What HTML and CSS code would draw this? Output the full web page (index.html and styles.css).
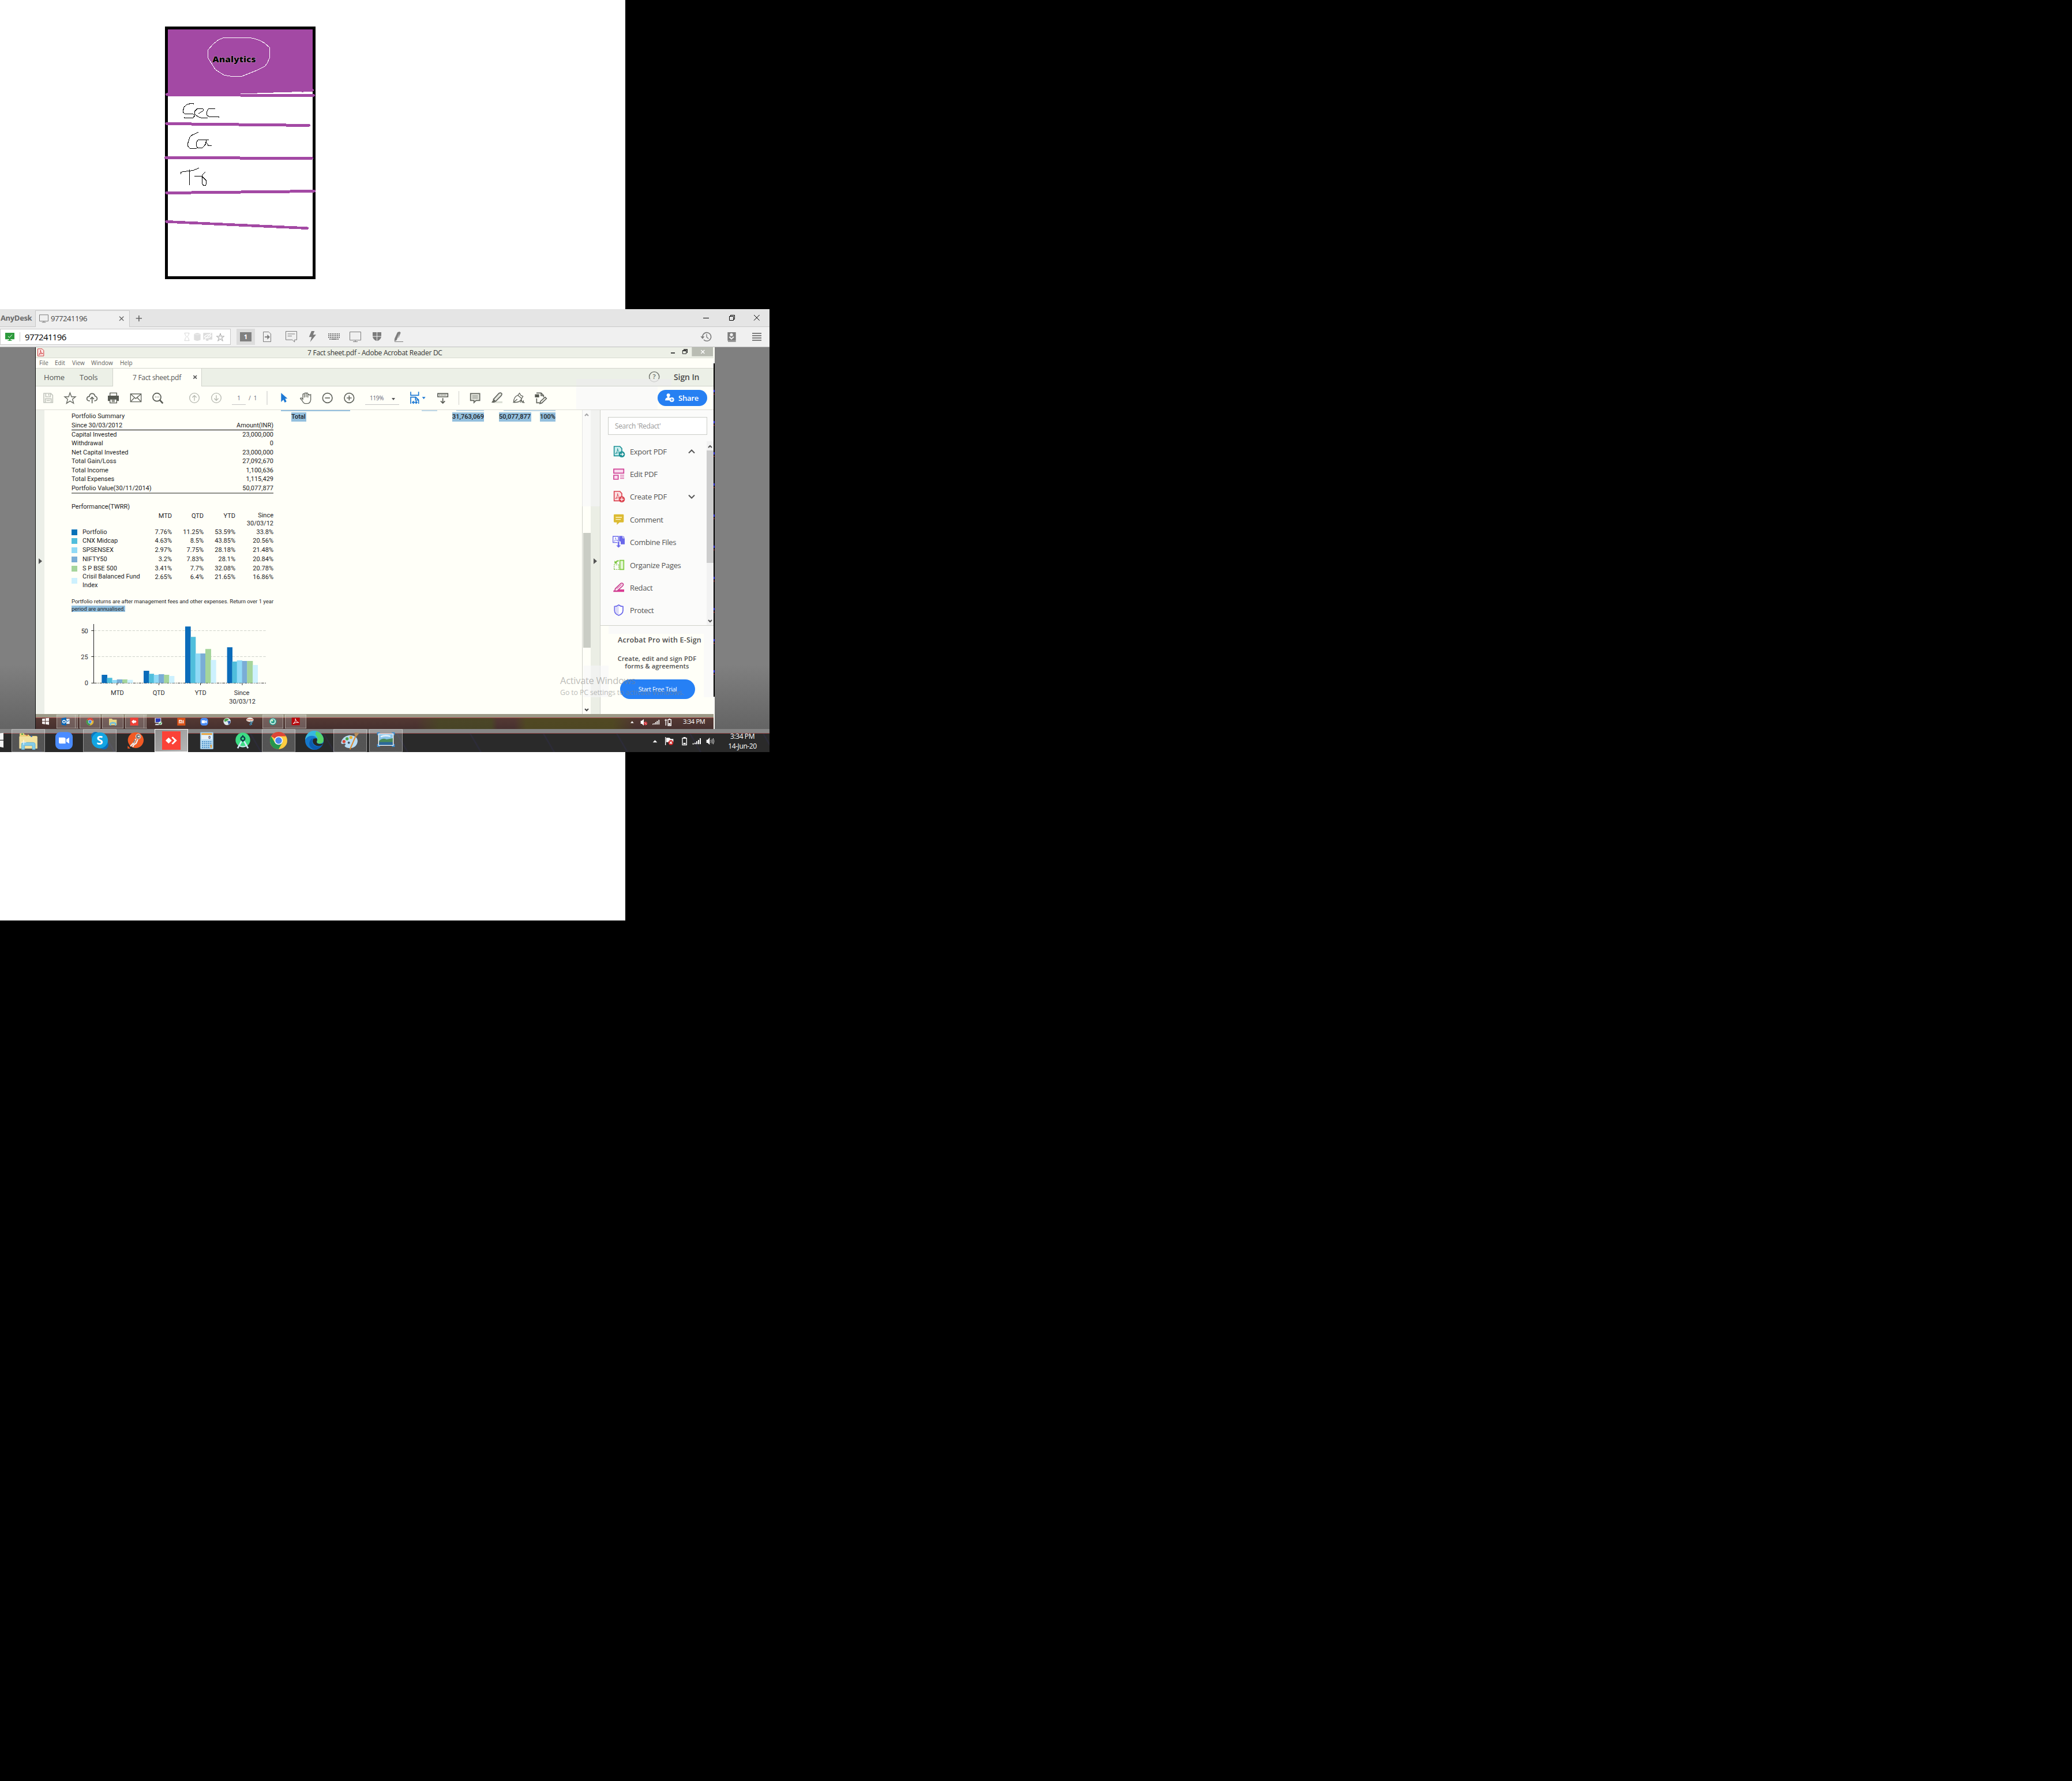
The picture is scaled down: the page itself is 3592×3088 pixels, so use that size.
FILE: index.html
```html
<!DOCTYPE html>
<html lang="en">
<head>
<meta charset="utf-8">
<title>Analytics sketch</title>
<link rel="stylesheet" href="styles.css">
</head>
<body>
<main class="board">

<section class="sketch">
  <svg class="phone" width="300" height="470" viewBox="0 0 900 1410" shape-rendering="crispEdges">
    <path d="M48 48H831V1362H48Z" fill="#000"/><path d="M63 63H816V1347H63Z" fill="#fff"/>
    <path d="M63 63H816V383L762 387L654 390L546 394L441 397V411H63Z" fill="#a349a4"/>
    <g fill="none" stroke="#a349a4" stroke-width="14" stroke-linecap="round">
      <path d="M58 401H100M441 406H821M760 382L815 379"/>
      <path d="M56 553H180M187 556H426M433 559H672M679 562H797"/>
      <path d="M52 730H432M439 733H812"/>
      <path d="M56 913H183M190 910H441M448 907H696M703 904H824"/>
      <path d="M56 1063L788 1097"/>
    </g>
    <path d="M354 106H486L510 110L540 120L566 134L593 158V208L580 238L568 254L528 275L480 294L450 306H386L354 300L310 272L290 240L271 210V170L300 138L326 117Z" fill="none" stroke="#fff" stroke-width="3"/>
    <text class="brand" x="295" y="234" textLength="226" lengthAdjust="spacingAndGlyphs">Analytics</text>
    <g fill="none" stroke="#000" stroke-width="3">
      <path d="M197 453V448H182L160 455L148 466L143 482V496L152 502H194L203 512L194 523H149V518"/>
      <path d="M222 501L247 486V477L236 475H216L203 488V504L218 516L236 523H271M309 475H274L266 490V510L278 517H329V522"/>
      <path d="M221 598L186 614L176 626L167 656V670L178 682H213M276 637H220L212 650V670L218 679H242L258 662L263 638V652L271 661V667H291"/>
      <path d="M130 815V805L168 800L193 797L224 784M176 792V873M202 829V826H232L242 830M257 804L242 820V866L248 874H260L263 862V850L242 828"/>
    </g>
  </svg>
</section>

<section class="capture">
  <header class="ad-tabs">
    <span class="ad-name">AnyDesk</span>
    <div class="ad-tab">
      <svg width="24" height="28" viewBox="189 26 72 84" fill="none" stroke="#7c7c7c" stroke-width="3"><path d="M205.500 46.500H250.500V79.500H205.500ZM218 85.500H238M228 80V86"/></svg>
      <span class="ad-id">977241196</span>
      <svg width="20" height="28" viewBox="602 26 60 84" stroke="#666" stroke-width="4"><path d="M620 55L642 77M642 55L620 77"/></svg>
    </div>
    <svg class="ad-plus" width="30" height="30" viewBox="678 18 90 90" stroke="#666" stroke-width="5"><path d="M707 66H738M722.500 51V82"/></svg>
    <svg class="ad-winbtns" width="130" height="30" viewBox="972 18 390 90" fill="none" stroke="#000" stroke-width="3"><path d="M1017 64.500H1047M1153.500 55.500H1174.500V76.500H1153.500ZM1159.500 55V49.500H1180.500V70.500H1175M1281 48L1310 77M1310 48L1281 77"/></svg>
  </header>

  <div class="ad-bar">
    <div class="ad-address">
      <svg width="36" height="28" viewBox="0 120 108 84"><path d="M27 141H75V175H55V180H62V183H40V180H47V175H27Z" fill="#2c9a3c"/><path d="M42 159L49 166L63 151" fill="none" stroke="#fff" stroke-width="3"/><path d="M103.500 138V186" stroke="#c8c8c8" stroke-width="3"/></svg>
      <span>977241196</span>
      <svg width="84" height="26" viewBox="948 123 252 78">
        <path d="M960 142H984V146H981V152L974 161L981 171V178H984V182H960V178H963V171L970 161L963 152V146H960Z" fill="none" stroke="#dadada" stroke-width="3"/>
        <path d="M1009 148Q1026 136 1043 148V178Q1026 188 1009 178Z" fill="#dedede"/><path d="M1012 148Q1026 155 1040 148" stroke="#f2f2f2" fill="none" stroke-width="3"/>
        <path d="M1057 142H1104V176H1084V183H1072V176H1057Z" fill="#dcdcdc"/><path d="M1062 162Q1080 142 1098 156Q1082 176 1062 162M1064 176L1098 143" fill="none" stroke="#fff" stroke-width="4"/>
        <path d="M1146 144L1151 159H1166L1154 168L1159 184L1146 174L1133 184L1138 168L1126 159H1141Z" fill="none" stroke="#a8a8a8" stroke-width="3"/><path d="M1146 154L1149 163H1157L1151 168L1153 176L1146 171L1139 176L1141 168L1135 163H1143Z" fill="none" stroke="#ccc" stroke-width="2"/>
      </svg>
    </div>
    <span class="ad-screen"><b>1</b></span>
    <svg class="ad-tools" width="260" height="34" viewBox="132 111 780 102" fill="none" stroke="#7c7c7c" stroke-width="3">
      <path d="M169.500 136.500H198L208.500 147V187.500H169.500Z"/><path d="M177 160H190V150L204 163L190 176V166H177Z" fill="#7c7c7c" stroke="none"/>
      <path d="M286.500 133.500H343.500V177.500H332V189L320 177.500H286.500ZM296 147H334M296 158H318"/>
      <path d="M420 132H436L428 151H444L413 189L421 163H407Z" fill="#7c7c7c" stroke="none"/>
      <path d="M507 147H568M507 156H568M507 165H568" stroke-width="6" stroke-dasharray="6 3"/><path d="M513 174H562" stroke-width="6" stroke-dasharray="7 3 28 3"/>
      <path d="M619.500 136.500H676.500V179.500H619.500ZM648 180V187M636 187.500H660"/>
      <path d="M738 138H759V158H738ZM762 138H783V158H762ZM738 161H759V184Q740 176 738 161ZM762 161H783Q781 176 762 184Z" fill="#7c7c7c" stroke="none"/>
      <path d="M868 139L879 136L862 179L852 184L853 172ZM878 137L883 140L872 167" fill="#7c7c7c" stroke-width="2"/><path d="M852 187.500H897"/>
    </svg>
    <svg class="ad-right" width="130" height="34" viewBox="972 111 390 102" fill="none" stroke="#7c7c7c">
      <path d="M1014 160A22 22 0 1 1 1020 177" stroke-width="5"/><path d="M1003 160H1024L1014 173Z" fill="#7c7c7c" stroke="none"/><path d="M1035 148V163L1045 172" stroke-width="4"/>
      <path d="M1144 138H1187V182H1144ZM1146 184H1187V188H1146Z" fill="#7c7c7c" stroke="none"/><circle cx="1164" cy="151" r="8" fill="#f0f0f0" stroke="none"/><path d="M1153 162L1164 173L1176 162" stroke="#f0f0f0" stroke-width="6"/>
      <path d="M1272 144H1320M1272 156H1320M1272 168H1320M1272 180H1320" stroke-width="6"/>
    </svg>
  </div>

  <div class="remote">
    <div class="acrobat">
      <div class="ac-title">
        <svg width="20" height="18" viewBox="186 216 60 54"><path d="M196.500 224.500H219L227.500 233V261.500H196.500Z" fill="#fbe9e8" stroke="#cf3b3b" stroke-width="3"/><path d="M203 254Q214 245 211 231Q211 247 223 249Q209 248 203 254" fill="none" stroke="#cf3b3b" stroke-width="3"/></svg>
        <span class="ac-caption">7 Fact sheet.pdf - Adobe Acrobat Reader DC</span>
        <svg width="77" height="18" viewBox="840 216 231 54"><path d="M849 246H870" stroke="#222" stroke-width="5"/><path d="M910 234H929V250H910Z" fill="none" stroke="#222" stroke-width="3"/><path d="M909 234H930M915 228H934V246" fill="none" stroke="#222" stroke-width="4"/><path d="M958 216H1068V263H958Z" fill="#b9bcb3"/><path d="M1006 231L1024 249M1024 231L1006 249" stroke="#fff" stroke-width="4"/></svg>
      </div>
      <nav class="ac-menu"><span class="m1">File</span><span class="m2">Edit</span><span class="m3">View</span><span class="m4">Window</span><span class="m5">Help</span></nav>
      <div class="ac-tabs">
        <span class="t-home">Home</span><span class="t-tools">Tools</span>
        <div class="t-doc"><span>7 Fact sheet.pdf</span><svg width="16" height="30" viewBox="990 328 48 90" stroke="#555" stroke-width="5"><path d="M1006 364L1023 381M1023 364L1006 381"/></svg></div>
        <svg class="t-help" width="24" height="30" viewBox="726 328 72 90"><circle cx="762.500" cy="371" r="26" fill="none" stroke="#6a6d66" stroke-width="4"/><text x="762" y="383" text-anchor="middle" font-size="34" font-weight="600" fill="#6a6d66">?</text></svg>
        <span class="t-sign">Sign In</span>
      </div>

      <div class="ac-tools">
        <svg width="40" height="40" viewBox="186 420 120 120" fill="none" stroke="#c3c6be" stroke-width="5"><path d="M228 456H264L274 466V504H228ZM238 457V474H262V457M253 459V468M236 503V484H266V503M242 493H260"/></svg>
        <svg width="38" height="40" viewBox="306 420 114 120" fill="none" stroke="#62655e" stroke-width="4"><path d="M364 453L372 474H393L377 487L383 508L364 496L346 508L352 487L336 474H357Z"/></svg>
        <svg width="38" height="40" viewBox="420 420 114 120" fill="none" stroke="#62655e" stroke-width="5"><path d="M468 495H462Q451 493 452 482Q454 472 465 472Q466 457 479 457Q491 457 494 470Q506 474 505 485Q503 495 490 495M479 508V478M469 486L479 476L489 486"/></svg>
        <svg width="38" height="40" viewBox="534 420 114 120"><path d="M561 468H618V496H608V488H572V496H561Z" fill="#565952"/><path d="M572 468V454H607V468M572 484H607V506H572ZM581 492H597M581 499H597" fill="none" stroke="#565952" stroke-width="4"/></svg>
        <svg width="38" height="40" viewBox="648 420 114 120" fill="none" stroke="#62655e" stroke-width="4"><path d="M679 459H734V500H679ZM681 461L706 483L732 461M681 498L700 478M732 498L713 478"/></svg>
        <svg width="38" height="40" viewBox="762 420 114 120" fill="none" stroke="#565952" stroke-width="5"><circle cx="816" cy="476" r="21"/><path d="M831 491L847 508" stroke-width="8"/><path d="M806 475H828" stroke-width="4" stroke-dasharray="4 5"/></svg>
        <svg class="gap-nav" width="38" height="40" viewBox="954 420 114 120" fill="none" stroke="#b5b8b0" stroke-width="4"><circle cx="1011" cy="480" r="25"/><path d="M1011 494V468M1000 478L1011 467L1022 478"/></svg>
        <svg width="38" height="40" viewBox="1068 420 114 120" fill="none" stroke="#b5b8b0" stroke-width="4"><circle cx="1125" cy="480" r="25"/><path d="M1125 466V492M1114 482L1125 493L1136 482"/></svg>
        <span class="field page">1</span><span class="pages">/ &nbsp;1</span>
        <i class="rule r1"></i>
        <svg width="32" height="40" viewBox="240 420 96 120"><path d="M262 454L295 483L283 484L290 499L281 504L274 489L262 501Z" fill="#1c78d4"/></svg>
        <svg width="37" height="40" viewBox="336 420 111 120" fill="none" stroke="#62655e" stroke-width="4"><path d="M375 489V461Q379 455 383 461V478V457Q387 450 392 457V476V457Q397 450 401 458V478V464Q406 458 409 465L416 462V490Q413 509 397 509H386Q378 508 371 493L362 483Q364 477 371 482L376 489"/></svg>
        <svg width="37" height="40" viewBox="447 420 111 120" fill="none" stroke="#62655e" stroke-width="5"><circle cx="503" cy="480" r="25"/><path d="M490 480H516"/></svg>
        <svg width="38" height="40" viewBox="558 420 114 120" fill="none" stroke="#62655e" stroke-width="5"><circle cx="616" cy="480" r="25"/><path d="M603 480H629M616 467V493"/></svg>
        <span class="field zoomlvl">119% <svg width="6" height="4" viewBox="0 0 6 4"><path d="M0 0H6L3 4Z" fill="#555"/></svg></span>
        <svg class="gap-fit" width="42" height="40" viewBox="912 420 126 120" fill="none" stroke="#1c78d4" stroke-width="5"><path d="M936 448V466H977V448M936 510V476H962L977 490V510M961 476V491H977M946 503H968M952 496L945 503L952 510M962 496L969 503L962 510"/><path d="M995 475H1013L1004 486Z" fill="#1c78d4" stroke="none"/></svg>
        <svg class="gap-kb" width="36" height="40" viewBox="1050 420 108 120" fill="none" stroke="#565952" stroke-width="5"><path d="M1077 457H1129V474H1077ZM1103 481V505M1092 496L1103 507L1114 496"/><path d="M1084 465H1124" stroke-dasharray="5 3"/></svg>
        <i class="rule r2"></i>
        <svg width="34" height="40" viewBox="1236 420 102 120" stroke="#62655e" stroke-width="5"><path d="M1247 457H1295V493H1276L1265 504V493H1247Z" fill="#e4e6de"/><path d="M1256 470H1286M1256 480H1286" stroke-width="3"/></svg>
        <svg width="34" height="40" viewBox="1338 420 102 120"><path d="M1375 497H1413V507H1368Z" fill="#dcdfd6"/><path d="M1366 487L1395 456Q1404 450 1410 458Q1411 464 1405 470L1377 498Z" fill="#e6e8e0" stroke="#62655e" stroke-width="5"/><path d="M1356 504L1367 487L1377 498L1370 505Z" fill="#62655e"/></svg>
        <svg class="gap-sign" width="34" height="40" viewBox="12 420 102 120" fill="none" stroke="#62655e" stroke-width="4"><path d="M31 503Q32 473 53 466L73 483Q66 505 31 503L50 486M53 466L62 455L68 466L80 472L73 483M66 504L72 490L76 503L82 496V504H88"/></svg>
        <svg class="gap-edit" width="36" height="40" viewBox="120 420 108 120" fill="none" stroke="#62655e" stroke-width="5"><path d="M150 454H174L187 467V476M151 482V505H166M174 454V468H187M195 476L202 483L178 506L168 509L171 498Z"/><path d="M142 461H164V477H142Z" fill="#565952" stroke="none"/></svg>
        <span class="share"><svg width="18" height="20" viewBox="818 452 54 60"><circle cx="838" cy="468" r="9" fill="#fff"/><path d="M821 495Q822 482 833 480V474H843V480Q850 482 852 495Z" fill="#fff"/><circle cx="856" cy="491" r="12" fill="#fff"/><path d="M849 491H863M856 484V498" stroke="#2680f0" stroke-width="3"/></svg>Share</span>
      </div>

      <div class="ac-body">
        <aside class="strip"><i class="tri"></i></aside>

        <article class="page-view">
          <div class="col-left">
            <table class="summary">
              <tr><td>Portfolio Summary</td><td></td></tr>
              <tr class="head"><td>Since 30/03/2012</td><td>Amount(INR)</td></tr>
              <tr><td>Capital Invested</td><td>23,000,000</td></tr>
              <tr><td>Withdrawal</td><td>0</td></tr>
              <tr><td>Net Capital Invested</td><td>23,000,000</td></tr>
              <tr><td>Total Gain/Loss</td><td>27,092,670</td></tr>
              <tr><td>Total Income</td><td>1,100,636</td></tr>
              <tr><td>Total Expenses</td><td>1,115,429</td></tr>
              <tr class="last"><td>Portfolio Value(30/11/2014)</td><td>50,077,877</td></tr>
            </table>
            <h3>Performance(TWRR)</h3>
            <div class="perf">
              <i></i><span></span><b>MTD</b><b>QTD</b><b>YTD</b><b class="since">Since 30/03/12</b>
              <i class="c1"></i><span>Portfolio</span><b>7.76%</b><b>11.25%</b><b>53.59%</b><b>33.8%</b>
              <i class="c2"></i><span>CNX Midcap</span><b>4.63%</b><b>8.5%</b><b>43.85%</b><b>20.56%</b>
              <i class="c3"></i><span>SPSENSEX</span><b>2.97%</b><b>7.75%</b><b>28.18%</b><b>21.48%</b>
              <i class="c4"></i><span>NIFTY50</span><b>3.2%</b><b>7.83%</b><b>28.1%</b><b>20.84%</b>
              <i class="c5"></i><span>S P BSE 500</span><b>3.41%</b><b>7.7%</b><b>32.08%</b><b>20.78%</b>
              <i class="c6"></i><span class="two">Crisil Balanced Fund Index</span><b>2.65%</b><b>6.4%</b><b>21.65%</b><b>16.86%</b>
            </div>
            <p class="note">Portfolio returns are after management fees and other expenses. Return over 1 year<br><mark>period are annualised.</mark></p>
            <svg class="chart" width="351" height="150" viewBox="192 180 1053 450">
              <g stroke="#cfd2ca" stroke-width="3" stroke-dasharray="13 7"><path d="M309 220.500H1205M309 355.500H1205"/></g>
              <path d="M307.500 186V493" stroke="#222" stroke-width="3"/>
              <path d="M309 493H1205" stroke="#333" stroke-width="3" stroke-dasharray="14 5 5 5"/>
              <path d="M295 220.500H309M295 355.500H309M295 493H309M428.500 493V504M646.500 493V504M862.500 493V504M1080 493V504" stroke="#222" stroke-width="3"/>
              <g fill="#0b6cba"><path d="M349 450H378V493H349ZM567 429H596V493H567ZM783 199H812V493H783ZM1001 307H1029V493H1001Z"/></g>
              <g fill="#50bedc"><path d="M376 466H404V493H376ZM594 445H621V493H594ZM811 253H838V493H811ZM1027 381H1053V493H1027Z"/></g>
              <g fill="#90daf6"><path d="M403 477H429V493H403ZM620 450H646V493H620ZM836 339H863V493H836ZM1052 375H1080V493H1052Z"/></g>
              <g fill="#7aadd6"><path d="M428 474H457V493H428ZM645 447H674V493H645ZM862 339H889V493H862ZM1079 378H1106V493H1079Z"/></g>
              <g fill="#a5d59b"><path d="M456 474H483V493H456ZM673 450H700V493H673ZM888 316H918V493H888ZM1105 378H1135V493H1105Z"/></g>
              <g fill="#cdf1fe"><path d="M482 476H511V493H482ZM699 456H727V493H699ZM916 373H944V493H916ZM1134 399H1161V493H1134Z"/></g>
              <g class="axis">
                <text x="242" y="234" textLength="36">50</text><text x="241" y="368" textLength="37">25</text><text x="260" y="505">0</text>
                <text x="396" y="556" textLength="68">MTD</text><text x="614" y="556" textLength="63">QTD</text><text x="833" y="556" textLength="60">YTD</text>
                <text x="1037" y="556" textLength="80">Since</text><text x="1012" y="599" textLength="137">30/03/12</text>
              </g>
            </svg>
          </div>
          <div class="col-right">
            <div class="cut"><i></i><i></i><i></i><i></i></div>
            <div class="total"><mark>Total</mark><mark>31,763,069</mark><mark>50,077,877</mark><mark>100%</mark></div>
          </div>
        </article>

        <div class="vscroll">
          <svg width="15" height="14" viewBox="0 0 15 14"><path d="M4 10L7 7L10 10" fill="none" stroke="#444" stroke-width="2"/></svg>
          <i class="thumb"></i>
          <svg width="15" height="14" viewBox="0 0 15 14"><path d="M4 5L7 8L10 5" fill="none" stroke="#444" stroke-width="2"/></svg>
        </div>
        <aside class="strip right"><i class="tri"></i></aside>

        <aside class="panel">
          <div class="tools">
            <div class="search">Search 'Redact'</div>
            <div class="tool-scroll">
              <ul>
                <li><svg width="24" height="24" viewBox="306 216 72 72"><path d="M314 225H344L354 236V274H314Z" fill="#cdeeee" stroke="#1f9296" stroke-width="5"/><path d="M321 263Q334 252 332 236Q333 253 347 258Q331 256 321 263" fill="none" stroke="#1f9296" stroke-width="3"/><circle cx="354" cy="266" r="16" fill="#1f9296"/><path d="M345 266H362M355 259L362 266L355 273" fill="none" stroke="#fff" stroke-width="4"/></svg><span>Export PDF</span><svg class="chev" width="12" height="8" viewBox="0 0 12 8"><path d="M1 6.500L6 1.500L11 6.500" fill="none" stroke="#555" stroke-width="2"/></svg></li>
                <li><svg width="24" height="24" viewBox="306 332 72 72" fill="#fadcf0" stroke="#cf3f93" stroke-width="5"><path d="M312 342H364V363H312ZM312 374H335V395H312Z"/><path d="M345 374H366M345 383H366M345 391H366" stroke-width="3"/></svg><span>Edit PDF</span></li>
                <li><svg width="24" height="24" viewBox="306 449 72 72"><path d="M314 458H344L354 469V507H314Z" fill="#fbdfe2" stroke="#dc4450" stroke-width="5"/><path d="M321 496Q334 485 332 469Q333 486 347 491Q331 489 321 496" fill="none" stroke="#dc4450" stroke-width="3"/><circle cx="354" cy="499" r="16" fill="#dc4450"/><path d="M344 499H364M354 489V509" stroke="#fff" stroke-width="4"/></svg><span>Create PDF</span><svg class="chev" width="12" height="8" viewBox="0 0 12 8"><path d="M1 1.500L6 6.500L11 1.500" fill="none" stroke="#555" stroke-width="2"/></svg></li>
                <li><svg width="24" height="24" viewBox="306 566 72 72"><path d="M312 578Q312 574 316 574H360Q364 574 364 578V612Q364 616 360 616H342L328 629V616H316Q312 616 312 612Z" fill="#dcbb33"/><path d="M322 590H354M322 601H348" stroke="#fff6cf" stroke-width="4"/></svg><span>Comment</span></li>
                <li><svg width="24" height="24" viewBox="306 684 72 72"><path d="M308 690H336V722H308Z" fill="#fff" stroke="#6a68ea" stroke-width="4"/><path d="M313 716Q323 709 321 696Q323 709 333 712Q321 711 313 716" fill="none" stroke="#6a68ea" stroke-width="2"/><path d="M340 688H358V700H369V731H348V716H340ZM361 688L369 697H361Z" fill="#6a68ea"/><path d="M332 716H342V736H351L337 750L323 736H332Z" fill="#6a68ea" stroke="#fff" stroke-width="2"/></svg><span>Combine Files</span></li>
                <li><svg width="24" height="24" viewBox="306 804 72 72"><path d="M344 815H364V862H344Z" fill="#e4f6d4" stroke="#7fcc3f" stroke-width="5"/><path d="M314 862V838H338M314 862H338V838" fill="none" stroke="#7aba3f" stroke-width="4" stroke-dasharray="6 5"/><path d="M316 816V832H332L326 826Q332 820 338 820V814Q328 814 321 821Z" fill="#7cc63f"/></svg><span>Organize Pages</span></li>
                <li><svg width="24" height="24" viewBox="306 923 72 72"><path d="M340 968H366V981H310V973H330Z" fill="#d93c93"/><path d="M320 964L347 938Q354 932 360 938Q364 944 358 950L331 975L317 977Z" fill="#fbe0f0" stroke="#c8408e" stroke-width="5"/><path d="M328 964L352 943" stroke="#c8408e" stroke-width="3"/></svg><span>Redact</span></li>
                <li><svg width="24" height="24" viewBox="306 1041 72 72"><path d="M338 1050Q348 1058 360 1058V1079Q359 1097 338 1104Q317 1097 316 1079V1058Q328 1058 338 1050Z" fill="#fff" stroke="#6a68ea" stroke-width="5"/><path d="M338 1053V1101Q319 1094 319 1079V1060Q330 1060 338 1053Z" fill="#dcdaf8"/></svg><span>Protect</span></li>
              </ul>
              <div class="pscroll">
                <svg width="12" height="14" viewBox="0 0 12 14"><path d="M3 9L6 6L9 9" fill="none" stroke="#555" stroke-width="2"/></svg>
                <i></i>
                <svg class="down" width="12" height="14" viewBox="0 0 12 14"><path d="M3 5L6 8L9 5" fill="none" stroke="#555" stroke-width="2"/></svg>
              </div>
            </div>
          </div>
          <div class="promo">
            <strong>Acrobat Pro with E-Sign</strong>
            <p>Create, edit and sign PDF<br>forms &amp; agreements</p>
            <a class="trial">Start Free Trial</a>
          </div>
        </aside>
      </div>

      <footer class="rt">
        <svg width="36" height="26" viewBox="186 24 108 78"><path d="M219 49L234 47V61H219ZM237 46L255 44V61H237ZM219 64H234V77L219 75ZM237 64H255V80L237 77Z" fill="#f4f0f0"/></svg>
        <svg class="on multi" width="38" height="26" viewBox="294 24 114 78"><rect x="340" y="49" width="22" height="26" fill="#e8f0fa"/><path d="M320 46L345 42V84L320 80Z" fill="#0a66b5"/><circle cx="333" cy="64" r="7" fill="none" stroke="#fff" stroke-width="4"/><path d="M346 56L352 64L360 54" fill="none" stroke="#0a66b5" stroke-width="3"/></svg>
        <svg class="on g2" width="36" height="26" viewBox="414 24 108 78"><circle cx="468" cy="64" r="19" fill="#e2b433"/><path d="M468 64L452 54A19 19 0 0 1 486 56Z" fill="#d9483b"/><path d="M452 54A19 19 0 0 0 466 83L474 68Z" fill="#3a9c50"/><circle cx="468" cy="64" r="9" fill="#4a86e0" stroke="#fff" stroke-width="2"/></svg>
        <svg class="on g3" width="37" height="26" viewBox="531 24 111 78"><path d="M567 48H582L586 53H607V82H567Z" fill="#e8d583"/><path d="M571 84V70Q587 60 604 70V84H597V74H578V84Z" fill="#6fbede"/></svg>
        <svg class="on multi g3" width="38" height="26" viewBox="651 24 114 78"><rect x="677" y="43" width="42" height="41" fill="#ee4138"/><path d="M684 64L694 54L704 64L694 74ZM701 55L710 64L701 73" fill="#fff"/></svg>
        <svg width="39" height="26" viewBox="765 24 117 78"><path d="M805 44H838V70H805Z" fill="#c8ccd8"/><path d="M810 47H834V66H810Z" fill="#2a38b8"/><path d="M809 75H826V82H806Z" fill="#d8dce0"/><circle cx="834" cy="72" r="9" fill="#e8f0e8"/><path d="M829 72L833 77L840 67" stroke="#3a9c50" stroke-width="4" fill="none"/></svg>
        <svg width="40" height="26" viewBox="882 24 120 78"><rect x="922" y="44" width="42" height="40" fill="#d9531a"/><path d="M932 73V57H943Q946 58 946 61V73M939 63V73M953 56V73" fill="none" stroke="#fff" stroke-width="4"/></svg>
        <svg width="40" height="26" viewBox="1002 24 120 78"><rect x="1042" y="44" width="40" height="40" rx="14" fill="#4a8cf4"/><path d="M1049 57H1066V72H1052Q1049 72 1049 69ZM1068 61L1075 57V72L1068 68Z" fill="#fff"/></svg>
        <svg width="40" height="26" viewBox="42 24 120 78"><circle cx="101" cy="63" r="19" fill="#dfe8ec"/><path d="M88 52Q100 42 110 54L96 62Q88 66 86 60Z" fill="#49a34d"/><path d="M100 62L118 60Q120 74 106 80Q112 68 100 62Z" fill="#2c50a0"/></svg>
        <svg width="41" height="26" viewBox="162 24 123 78"><ellipse cx="220" cy="54" rx="19" ry="11" fill="#f0ece4"/><path d="M204 54H236" stroke="#d05840" stroke-width="4"/><path d="M222 60L230 80M236 62L222 76" stroke="#4a98b8" stroke-width="4"/><circle cx="222" cy="78" r="4" fill="none" stroke="#3a88b8" stroke-width="3"/></svg>
        <svg class="on" width="36" height="26" viewBox="285 24 108 78"><circle cx="339" cy="63" r="17" fill="#dff2ee" stroke="#28a090" stroke-width="4"/><circle cx="339" cy="62" r="10" fill="#2aa08c"/><circle cx="335" cy="58" r="5" fill="#d8f8c8"/></svg>
        <svg class="on g3" width="37" height="26" viewBox="402 24 111 78"><rect x="437" y="43" width="42" height="39" fill="#b8080c"/><path d="M444 74Q460 64 456 48Q460 66 474 68Q458 66 444 74" fill="none" stroke="#fff" stroke-width="3"/></svg>
        <svg class="rt-tray" width="82" height="26" viewBox="561 534 246 78"><path d="M579 581H596L587.500 571Z" fill="#fff"/><path d="M632 569H638L648 560V594L638 585H632Z" fill="#fff"/><circle cx="657" cy="583" r="8" fill="#c8242c" stroke="#e8484c" stroke-width="3"/><path d="M652 578L662 588" stroke="#fff" stroke-width="3"/><path d="M693 587H697M702 589V582M710 589V576M718 589V570M727 589V564" stroke="#fff" stroke-width="5"/><path d="M757 566H769M763 560V594M774 563H790V594H774ZM778 560H786" stroke="#fff" stroke-width="4" fill="none"/><path d="M777 582H787V590H777Z" fill="#fff"/></svg>
        <span class="rt-clock">3:34 PM</span>
      </footer>

      <i class="haze h1"></i><i class="haze h2"></i><i class="haze h3"></i><i class="haze h4"></i><i class="haze h5"></i><i class="haze h6"></i>
      <div class="watermark"><b>Activate Windows</b><span>Go to PC settings to activate Windows.</span></div>
      <i class="edge"></i>
    </div>
  </div>

  <footer class="lt">
    <svg width="20" height="40" viewBox="0 102 60 120"><path d="M0 124L18 122V158H0ZM0 162H18V199L0 195Z" fill="#f6f6f6"/></svg>
    <svg class="on" width="58" height="40" viewBox="60 102 174 120"><path d="M102 128Q102 124 106 124H124L128 131H150L154 138H190L194 142V204H102Z" fill="#e9cf77"/><path d="M100 141H194V203H100Z" fill="#f3e2a0"/><path d="M111 126H120V131H111Z" fill="#21a03a"/><path d="M134 132H144V136H134Z" fill="#cc4830"/><path d="M159 138H168V143H159Z" fill="#2a70c8"/><path d="M112 209V182Q112 172 124 172H170Q183 172 183 182V209H168V188H128V209Z" fill="#84cbe8" stroke="#4ca4cc" stroke-width="2"/><path d="M123 158V184M111 171H136" stroke="#fff" stroke-width="3"/></svg>
    <svg width="66" height="40" viewBox="234 102 198 120"><rect x="288" y="118" width="90" height="90" rx="26" fill="#4a8cff"/><path d="M306 146H332Q341 146 341 154V178H314Q306 178 306 170ZM345 156L360 146V178L345 168Z" fill="#fff"/></svg>
    <svg class="on" width="58" height="40" viewBox="432 102 174 120"><circle cx="497" cy="140" r="23" fill="#0b78c0"/><circle cx="540" cy="184" r="24" fill="#0b6cb8"/><circle cx="519" cy="161" r="42" fill="#12a5e2"/><text x="519" y="182" text-anchor="middle" class="sk">S</text></svg>
    <svg width="66" height="40" viewBox="606 102 198 120"><circle cx="706" cy="160" r="41" fill="#f15a24"/><path d="M664 189L678 203H664Z" fill="#f15a24"/><circle cx="719" cy="141" r="13" fill="#777" stroke="#eee" stroke-width="3"/><path d="M714 140L726 136V146Z" fill="#fff"/><path d="M706 153L697 172L678 192M716 157L708 176L696 184L690 196" fill="none" stroke="#eee" stroke-width="7"/><path d="M702 158L694 174" stroke="#777" stroke-width="5"/></svg>
    <svg class="on active" width="58" height="40" viewBox="804 102 174 120"><rect x="843" y="114" width="96" height="96" fill="#fb4237"/><path d="M861 162L877 146L893 162L877 178Z" fill="#fff"/><path d="M892 146L899 142L920 162L899 182L892 178L907 162Z" fill="#fff"/></svg>
    <svg width="62" height="40" viewBox="978 102 186 120"><rect x="1042" y="119" width="67" height="87" rx="3" fill="#b9dcf2" stroke="#7db4dc" stroke-width="2"/><path d="M1048 124H1103V132H1048Z" fill="#f0a030"/><path d="M1048 134H1103V156H1048Z" fill="#e8f2f8"/><text x="1084" y="152" font-size="20" font-weight="700" fill="#446">0</text><path d="M1050 168H1102M1050 178H1102M1050 188H1102M1050 198H1092" stroke="#4a90c8" stroke-width="6" stroke-dasharray="6 4"/><path d="M1098 184V200" stroke="#f0a030" stroke-width="7"/></svg>
    <svg width="66" height="40" viewBox="84 102 198 120"><circle cx="183" cy="159" r="38" fill="#3ddc84"/><path d="M176 166L156 202M190 166L210 202" stroke="#d5e8f8" stroke-width="8"/><path d="M160 186Q183 202 206 186" fill="none" stroke="#d5e8f8" stroke-width="5"/><circle cx="183" cy="152" r="10" fill="none" stroke="#0e3b48" stroke-width="7"/><path d="M183 134V142M183 163V168" stroke="#0e3b48" stroke-width="6"/></svg>
    <svg class="on" width="58" height="40" viewBox="282 102 174 120"><circle cx="369" cy="162" r="45" fill="#ffcd40"/><path d="M369 162L330 139.500A45 45 0 0 1 408 139.500L369 140Z" fill="#db4437"/><path d="M330 139.500A45 45 0 0 0 369 207L389 172L369 162L350 173Z" fill="#25964e"/><circle cx="369" cy="162" r="22" fill="#f4f4f4"/><circle cx="369" cy="162" r="17" fill="#4a86ee"/></svg>
    <svg width="66" height="40" viewBox="456 102 198 120"><circle cx="555" cy="162" r="48" fill="#1578cc"/><path d="M507 160A48 48 0 0 1 603 158Q602 178 580 178Q568 176 568 168Q574 160 568 150Q552 132 526 140Q512 146 507 160Z" fill="#38b8e0"/><path d="M564 115A48 48 0 0 1 603 158Q602 178 580 178Q568 176 568 168Q578 150 560 130Z" fill="#56d468"/><path d="M548 150Q536 172 556 188Q574 198 596 186Q586 206 560 210Q530 204 528 178Q530 156 548 150Z" fill="#0c5cb0"/><path d="M550 152Q540 170 556 184Q572 196 594 186L604 172Q600 180 582 180Q566 178 567 168Q572 158 566 150Z" fill="#262626"/></svg>
    <svg class="on" width="58" height="40" viewBox="654 102 174 120"><path d="M736 134Q778 134 780 164Q776 200 738 202Q716 200 712 190Q724 178 710 178Q694 184 694 172Q698 142 736 134Z" fill="#b8dcf4"/><circle cx="725" cy="153" r="8" fill="#4aa84a"/><circle cx="745" cy="146" r="8" fill="#e8b030"/><circle cx="709" cy="167" r="8" fill="#d84838"/><circle cx="734" cy="173" r="6" fill="#456"/><path d="M772 134L740 208" stroke="#e08a2c" stroke-width="6"/><path d="M764 120L789 122L774 142L764 134Z" fill="#b48a5c"/></svg>
    <svg class="on g4" width="58" height="40" viewBox="840 102 174 120"><path d="M884 134V122H896M958 122H970V134M970 180V192H958M896 192H884V180" fill="none" stroke="#3a8cd0" stroke-width="6"/><path d="M889 127H965V187H889Z" fill="#8ac4ea" stroke="#fff" stroke-width="4"/><path d="M891 164Q910 146 930 156L963 150V172H891Z" fill="#4a8a5a"/><path d="M891 170H963V185H891Z" fill="#2c6898"/><path d="M900 142Q920 132 950 140" stroke="#e8f4fc" stroke-width="7" fill="none"/></svg>
    <svg class="lt-tray" width="130" height="40" viewBox="660 612 390 120"><path d="M695 682H718L706.500 670Z" fill="#fff"/><path d="M759 654H763V696H759ZM765 658H782L788 664H802V680H765Z" fill="#fff"/><circle cx="789" cy="683" r="13" fill="#cc2020"/><path d="M783 677L795 689M795 677L783 689" stroke="#fff" stroke-width="4"/><path d="M849 660H871V695H849ZM854 656H866" fill="none" stroke="#fff" stroke-width="4"/><path d="M854 684H866V691H854Z" fill="#fff"/><path d="M902 689H908M915 691V683M924 691V676M933 691V669M942 691V660" stroke="#fff" stroke-width="6"/><path d="M974 668H980L991 656V694L980 684H974Z" fill="#fff"/><path d="M997 669Q1002 676 997 683M1003 664Q1010 676 1003 688M1009 660Q1018 676 1009 691" fill="none" stroke="#ddd" stroke-width="3"/></svg>
    <div class="lt-clock"><span>3:34 PM</span><span>14-Jun-20</span></div>
  </footer>
</section>

<section class="blank"></section>
</main>
</body>
</html>
```
FILE: styles.css
```css
* { box-sizing: border-box; }
html, body { margin: 0; background: #000; }
body { width: 3592px; height: 3088px; overflow: hidden; font-family: "Open Sans", "Noto Sans", sans-serif; color: #555; }
svg { display: block; flex: none; }
i { font-style: normal; }
.board { width: 1334px; display: flex; flex-direction: column; }

.sketch { width: 1084px; height: 536px; padding: 30px 0 0 270px; background: #fff; }
.blank { width: 1084px; height: 292px; background: #fff; }
.brand { font-size: 41px; font-weight: 800; fill: #000; stroke: #e9c9d8; stroke-width: 2px; paint-order: stroke; }

.capture { width: 1334px; height: 768px; display: flex; flex-direction: column; overflow: hidden; }

/* remote-desktop client chrome */
.ad-tabs { height: 31px; flex: none; display: flex; background: #e5e5e5; border-bottom: 1px solid #c8c8c8; }
.ad-name { width: 61px; padding-left: 1px; font-size: 13px; font-weight: 700; letter-spacing: -.35px; line-height: 31px; color: #6b6b6b; }
.ad-tab { width: 164px; height: 29px; margin-top: 2px; padding-left: 1px; display: flex; background: #f0f0f0; border: 1px solid #c8c8c8; border-bottom: 0; }
.ad-tab svg:last-child { margin-left: auto; margin-right: 3px; }
.ad-id { margin-left: 1px; font-size: 13px; letter-spacing: -.43px; line-height: 26px; color: #444; }
.ad-plus { margin-left: 1px; }
.ad-winbtns { margin-left: auto; }
.ad-bar { height: 35px; flex: none; display: flex; background: #f0f0f0; border-bottom: 1px solid #c0c0c0; }
.ad-address { width: 400px; height: 28px; margin-top: 3px; display: flex; align-items: center; background: #fff; border: 1px solid #c8c8c8; }
.ad-address span { margin-left: 7px; font-size: 15px; letter-spacing: -.6px; line-height: 26px; color: #000; }
.ad-address svg:first-child { margin-left: -1px; }
.ad-address svg:last-child { margin-left: auto; margin-right: -1px; }
.ad-screen { width: 32px; height: 28px; margin: 3px 2px 0 10px; display: grid; place-items: center; background: #dcdcdc; }
.ad-screen b { width: 20px; height: 16px; background: #808080; color: #fff; font-size: 11px; line-height: 16px; text-align: center; }
.ad-right { margin-left: auto; }

.remote { height: 662px; flex: none; padding-left: 61px; background: linear-gradient(#808080 0 550px, #646464 662px); }
.acrobat { position: relative; width: 1178px; height: 662px; padding: 0 2px 0 0; border-left: 1px solid #111; background: #fffff8; display: flex; flex-direction: column; }

.ac-title { height: 19px; flex: none; display: flex; background: #edf0e7; border-bottom: 1px solid #d8dbd2; }
.ac-caption { margin-left: 451px; font-size: 12px; letter-spacing: -.25px; line-height: 20px; color: #333; white-space: nowrap; }
.ac-title svg:last-child { margin-left: auto; }
.ac-menu { height: 18px; flex: none; display: flex; padding-left: 6px; border-bottom: 1px solid #d4d6ce; font-size: 10px; line-height: 17px; color: #606060; }
.ac-menu .m1 { width: 27px; }
.ac-menu .m2 { width: 30px; }
.ac-menu .m3 { width: 33px; }
.ac-menu .m4 { width: 50px; }
.ac-tabs { height: 31px; flex: none; display: flex; background: #ecf0e7; border-bottom: 1px solid #d0d3cb; font-size: 13px; line-height: 30px; letter-spacing: -.2px; }
.t-home { width: 62px; margin-left: 14px; }
.t-tools { width: 57px; }
.t-doc { width: 155px; height: 31px; display: flex; padding-left: 34px; background: #fffff8; border: solid #d0d3cb; border-width: 0 1px; font-size: 12px; letter-spacing: -.3px; }
.t-doc span { line-height: 31px; }
.t-doc svg { margin-left: auto; margin-right: 3px; }
.t-help { margin-left: 772px; }
.t-sign { margin-left: 22px; font-size: 14px; font-weight: 600; letter-spacing: -.1px; color: #4a4a4a; }

.ac-tools { height: 41px; flex: none; display: flex; align-items: flex-start; border-bottom: 1px solid #dcdcd6; color: #667; font-size: 10px; }
.gap-nav { margin-left: 26px; }
.field { height: 32px; border-bottom: 1px solid #c4c4c4; line-height: 40px; }
.page { width: 24px; margin-left: 8px; text-align: center; }
.pages { margin-left: 5px; line-height: 40px; width: 30px; }
.rule { width: 1px; height: 24px; margin-top: 8px; background: #d0d0cc; }
.r1 { margin-left: 1px; margin-right: 16px; width: 2px; background: #e2e2de; }
.r2 { margin-left: 9px; margin-right: 16px; }
.zoomlvl { width: 59px; margin-left: 9px; padding: 0 7px 0 8px; display: flex; align-items: baseline; justify-content: space-between; letter-spacing: -.3px; }
.zoomlvl svg { margin-bottom: 2px; }
.gap-fit { margin-left: 12px; }
.gap-kb { margin-left: 4px; }
.gap-sign { margin-left: 4px; }
.gap-edit { margin-left: 2px; }
.share { width: 86px; height: 28px; margin: 6px 11px 0 auto; padding-left: 12px; display: flex; align-items: center; gap: 6px; border-radius: 14px; background: #2680f2; color: #fff; font-size: 13px; font-weight: 600; letter-spacing: -.2px; }

.ac-body { height: 527px; flex: none; display: flex; }
.strip { width: 15px; flex: none; display: flex; align-items: center; padding: 0 0 3px 5px; background: #ecefe8; }
.tri { border: solid transparent; border-width: 5px 0 5px 6px; border-left-color: #555; }
.strip.right { width: 17px; background: #ebeee5; border-right: 1px solid #cfd1ca; }

.page-view { width: 932px; flex: none; display: flex; font-family: Roboto, sans-serif; font-size: 11px; color: #1c1c24; overflow: hidden; }
.col-left { width: 351px; margin-left: 47px; flex: none; }
.summary { width: 350px; margin-top: 3px; border-collapse: collapse; }
.summary tr { height: 15.600px; }
.summary td { padding: 0; line-height: 15px; }
.summary td:last-child { text-align: right; }
.summary .head td { border-bottom: 1px solid #000; }
.summary .last td { border-bottom: 2px solid #8e8f8a; }
h3 { margin: 15px 0 0; font-size: 11px; font-weight: 400; line-height: 16px; }
.perf { display: grid; grid-template-columns: 19px 100px 55px 55px 55px 66px; grid-template-rows: 28px repeat(5, 15.700px) 29px; line-height: 15px; }
.perf b { font-weight: 400; text-align: right; }
.perf .since { padding-left: 16px; line-height: 14.500px; }
.perf .two { line-height: 14.500px; }
.perf i { width: 10px; height: 10px; margin-top: 3px; }
.c1 { background: #0672b8; }
.c2 { background: #50bedc; }
.c3 { background: #90daf6; }
.c4 { background: #7aadd6; }
.c5 { background: #a5d59b; }
.perf .c6 { background: #cdf1fe; margin-top: 9px; }
.note { margin: 15px 0 0; font-size: 9.500px; letter-spacing: -.02px; line-height: 12.500px; white-space: nowrap; }
mark { background: #94c0de; color: inherit; }
.chart { margin-top: 18px; }
.axis { font-size: 33px; fill: #2c2c30; }
.col-right { width: 480px; margin-left: 12px; }
.cut { display: flex; height: 2px; }
.cut i { background: #94c0de; width: 120px; }
.cut i:nth-child(2) { width: 27px; margin-left: 124px; opacity: .6; }
.cut i:nth-child(3) { width: 48px; margin-left: 33px; opacity: .6; }
.cut i:nth-child(4) { width: 90px; margin-left: 34px; opacity: .6; }
.total { display: flex; margin-top: 2px; padding-left: 18px; font-weight: 500; line-height: 16px; }
.total mark:nth-child(1) { width: 26px; }
.total mark:nth-child(2) { margin-left: 253px; width: 55px; }
.total mark:nth-child(3) { margin-left: 26px; width: 56px; }
.total mark:nth-child(4) { margin-left: 15px; width: 27px; }

.vscroll { width: 15px; flex: none; display: flex; flex-direction: column; border-left: 1px solid #cfd1ca; }
.vscroll .thumb { width: 13px; height: 199px; margin: 199px 0 0 1px; background: #cacdc5; }
.vscroll svg:last-child { margin-top: auto; }

.panel { width: 196px; flex: none; display: flex; flex-direction: column; font-size: 13px; letter-spacing: -.35px; }
.tools { height: 374px; border-bottom: 1px solid #cfd1ca; background: #fbfbfa; }
.search { width: 172px; height: 31px; margin: 12px 0 0 13px; padding-left: 11px; border: 1px solid #cbcdc8; background: #fff; color: #999; font-size: 12px; line-height: 29px; }
.tool-scroll { display: flex; margin-top: 11px; height: 319px; }
.tool-scroll ul { width: 184px; margin: -2px 0 0; padding: 0 0 0 21px; list-style: none; }
.tool-scroll li { height: 39.400px; display: flex; align-items: center; }
.tool-scroll li span { margin-left: 6px; width: 101px; white-space: nowrap; }
.pscroll { width: 12px; display: flex; flex-direction: column; background: #f2f2f2; padding-top: 2px; }
.pscroll i { height: 195px; background: #cdcdcd; }
.pscroll .down { margin-top: auto; }
.promo { height: 153px; display: flex; flex-direction: column; align-items: center; color: #4c4c4c; }
.promo strong { margin: 15px 0 0 9px; font-size: 12.500px; font-weight: 600; line-height: 20px; letter-spacing: .18px; white-space: nowrap; }
.promo p { margin: 15px 0 0; font-size: 11px; font-weight: 600; line-height: 13px; text-align: center; letter-spacing: .15px; }
.trial { width: 130px; height: 34px; margin: 17px -2px 0 0; border-radius: 17px; background: #2680f5; color: #fff; font-size: 10.500px; line-height: 34px; text-align: center; letter-spacing: -.3px; }

/* faint compression patches left over the session picture */
.haze { position: absolute; background: rgba(246, 246, 250, .55); }
.h1 { left: 937px; top: 55px; width: 239px; height: 12px; background: rgba(236, 236, 236, .8); z-index: 0; clip-path: polygon(0 0, 165px 0, 165px 100%, 0 100%); }
.h2 { left: 937px; top: 68px; width: 141px; height: 40px; }
.h3 { left: 947px; top: 109px; width: 31px; height: 167px; }
.h4 { left: 993px; top: 483px; width: 183px; height: 14px; }
.h5 { left: 949px; top: 552px; width: 44px; height: 55px; }
.h6 { left: 1158px; top: 497px; width: 18px; height: 110px; }
.edge { position: absolute; left: 1175px; top: 28px; width: 2px; height: 578px; background: repeating-linear-gradient(#000 0 46px, #1414c0 46px 50px, #000 50px 53px, #a01010 53px 54px); }

.watermark { position: absolute; left: 909px; top: 566px; display: flex; flex-direction: column; color: rgba(130, 130, 128, .55); white-space: nowrap; }
.watermark b { font-weight: 400; font-size: 16.500px; letter-spacing: -.3px; line-height: 24px; }
.watermark span { font-size: 12.500px; letter-spacing: -.2px; line-height: 18px; }

/* task bar inside the remote session */
.rt { height: 26px; flex: none; display: flex; color: #fff; background:
  linear-gradient(#9c9987 0 6px, #a44a4a 6px 7px, transparent 7px),
  linear-gradient(90deg, transparent 0 660px, rgba(72, 76, 34, .7) 700px 790px, transparent 800px 830px, rgba(80, 78, 30, .75) 850px 1000px, transparent 1040px),
  linear-gradient(#5a3c36, #46302e); }
.rt .on { --line: linear-gradient(rgba(220,220,210,.5), rgba(220,220,210,.5)); --fill: linear-gradient(rgba(255,255,255,.2), rgba(255,255,255,.2)); background:
  var(--line) no-repeat 0 1px / 100% 1px, var(--line) no-repeat 0 24px / 100% 1px,
  var(--line) no-repeat 0 1px / 1px 24px, var(--line) no-repeat 100% 1px / 1px 24px,
  var(--fill) no-repeat 0 1px / 100% 24px; }
.rt .multi { background:
  var(--line) no-repeat 0 1px / 100% 1px, var(--line) no-repeat 0 24px / 100% 1px,
  var(--line) no-repeat 0 1px / 1px 24px, var(--line) no-repeat 32px 1px / 1px 24px, var(--line) no-repeat 36px 1px / 1px 24px,
  var(--fill) no-repeat 0 1px / 36px 24px; }
.rt .g2 { margin-left: 2px; }
.rt .g3 { margin-left: 3px; }
.rt-tray { margin-left: auto; }
.rt-clock { width: 68px; padding-left: 15px; font-size: 11px; letter-spacing: -.6px; word-spacing: 1px; line-height: 26px; white-space: nowrap; }

/* local task bar */
.lt { height: 40px; flex: none; display: flex; color: #fff; background:
  linear-gradient(#868686 0 7px, #8e4646 7px 8px, transparent 8px),
  repeating-linear-gradient(60deg, #2a2a2a 0 60px, #2d2c3c 62px, #2a2a2a 64px 110px); }
.lt .on { background: linear-gradient(rgba(255,255,255,.2), rgba(255,255,255,.2)) no-repeat 0 1px / 100% 38px; outline: 1px solid rgba(255,255,255,.4); outline-offset: -1px; }
.lt .active { background: linear-gradient(135deg, #8c8c8c, #b8b8b8); outline-color: #fff; }
.lt .g4 { margin-left: 4px; }
.sk { font-size: 62px; font-weight: 700; fill: #fff; }
.lt-tray { margin-left: auto; }
.lt-clock { width: 84px; padding: 4px 10px 0 0; display: flex; flex-direction: column; align-items: center; font-size: 12px; letter-spacing: -.4px; line-height: 17px; }
```
